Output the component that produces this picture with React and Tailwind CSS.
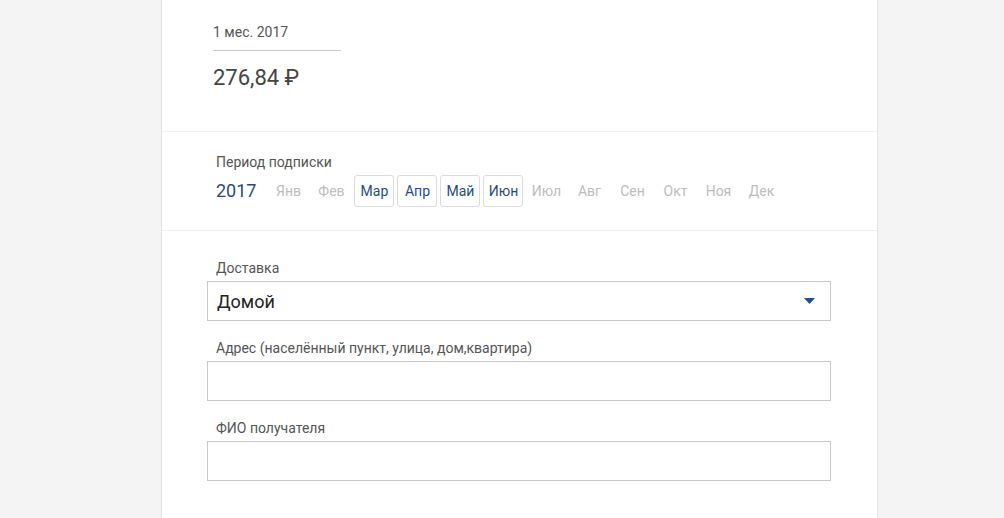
import React from "react";

const months = [
  { name: "Янв", active: false },
  { name: "Фев", active: false },
  { name: "Мар", active: true },
  { name: "Апр", active: true },
  { name: "Май", active: true },
  { name: "Июн", active: true },
  { name: "Июл", active: false },
  { name: "Авг", active: false },
  { name: "Сен", active: false },
  { name: "Окт", active: false },
  { name: "Ноя", active: false },
  { name: "Дек", active: false },
];

function Field({ label, children }) {
  return (
    <div className="flex flex-col">
      <label className="pl-[9px] text-[14px] leading-4 text-[#555]">{label}</label>
      <div className="mt-[5px]">{children}</div>
    </div>
  );
}

export default function App() {
  return (
    <div className="min-h-[518px] bg-[#f4f4f4] font-['Roboto',sans-serif]">
      <div className="ml-[161px] w-[717px] min-h-[518px] border-x border-[#e2e2e2] bg-white">
        {/* Price */}
        <div className="border-b border-[#f0f0f0] h-[132px] pt-[24px] pl-[51px]">
          <div className="w-[128px] border-b border-[#c8c8c8] pb-[10px] text-[14px] leading-4 text-[#555]">
            1 мес. 2017
          </div>
          <div className="mt-[14px] text-[22px] leading-[26px] text-[#444]">
            276,84 ₽
          </div>
        </div>

        {/* Subscription period */}
        <div className="border-b border-[#f0f0f0] pt-[22px] pb-[23px] pl-[54px]">
          <div className="text-[14px] leading-4 text-[#555]">Период подписки</div>
          <div className="mt-[5px] flex items-center">
            <span className="mr-[12px] text-[18px] leading-[32px] text-[#2d4a78]">2017</span>
            <div className="flex gap-[3px]">
              {months.map((m) => (
                <div
                  key={m.name}
                  className={
                    m.active
                      ? "flex h-[32px] w-[40px] items-center justify-center rounded-[3px] border border-[#dcdcdc] text-[14px] text-[#1f4c88]"
                      : "flex h-[32px] w-[40px] items-center justify-center rounded-[3px] border border-transparent text-[14px] text-[#bdbdbd]"
                  }
                >
                  {m.name}
                </div>
              ))}
            </div>
          </div>
        </div>

        {/* Delivery */}
        <div className="flex flex-col gap-[19px] pl-[45px] pr-[46px] pt-[29px]">
          <Field label="Доставка">
            <div className="flex h-[40px] items-center justify-between border border-[#c8c8c8] pl-[9px] pr-[15px]">
              <span className="text-[18px] text-[#222]">Домой</span>
              <svg width="11" height="6" viewBox="0 0 11 6">
                <path d="M0 0 L11 0 L5.5 6 Z" fill="#1e4f9c" />
              </svg>
            </div>
          </Field>
          <Field label="Адрес (населённый пункт, улица, дом,квартира)">
            <input className="block h-[40px] w-full border border-[#c8c8c8] outline-none" />
          </Field>
          <Field label="ФИО получателя">
            <input className="block h-[40px] w-full border border-[#c8c8c8] outline-none" />
          </Field>
        </div>
      </div>
    </div>
  );
}
